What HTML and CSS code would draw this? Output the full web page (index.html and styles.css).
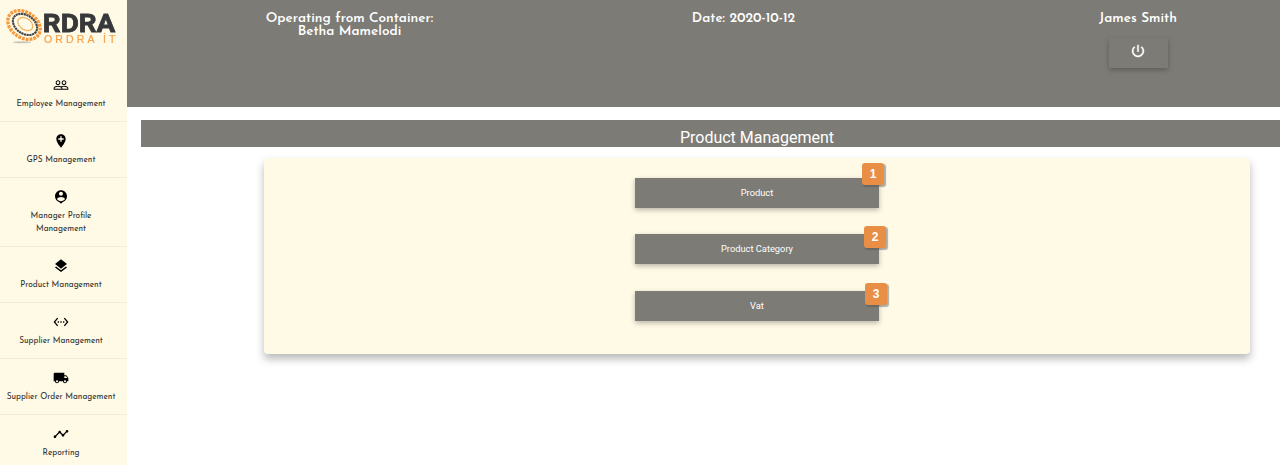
FILE: index.html
```html
<!DOCTYPE html>
<html lang="en">
<head>
<meta charset="utf-8">
<title>Product Management</title>
<link rel="stylesheet" href="styles.css">
</head>
<body>
<div class="app">
  <aside class="sidebar">
    <svg class="logo" width="127" height="66" viewBox="0 0 127 66">
      <defs><filter id="soft"><feGaussianBlur stdDeviation="0.45"/></filter></defs>
      <g filter="url(#soft)">
      <ellipse cx="22" cy="42.3" rx="9" ry="1" fill="#c9c5b8"/>
      <g fill="none" transform="rotate(34 24 25)">
        <ellipse cx="24" cy="25" rx="17.5" ry="12.7" stroke="#f5993a" stroke-width="3.4" stroke-dasharray="2.8 1"/>
        <ellipse cx="24.5" cy="24" rx="13.2" ry="9.2" stroke="#444" stroke-width="2.1" stroke-dasharray="2.2 .5"/>
        <ellipse cx="24.5" cy="23.5" rx="8.2" ry="5.6" stroke="#f5a54c" stroke-width="1.3" stroke-dasharray="1.5 .3"/>
      </g>
      <text class="logo-name" x="42.8" y="32" textLength="72.5" lengthAdjust="spacingAndGlyphs">RDRA</text>
      <text class="logo-sub" x="44" y="42.6" textLength="71.500">ORDRA İT</text>
      </g>
    </svg>
    <nav class="menu">
      <a class="item"><svg class="icon" viewBox="0 0 24 24"><path d="M16.5 13c-1.2 0-3.07.34-4.5 1-1.43-.67-3.3-1-4.5-1C5.33 13 1 14.08 1 16.25V19h22v-2.75c0-2.17-4.33-3.25-6.5-3.25zm-4 4.5h-10v-1.25c0-.54 2.56-1.75 5-1.75s5 1.21 5 1.75v1.25zm9 0H14v-1.25c0-.46-.2-.86-.52-1.22.88-.3 1.96-.53 3.02-.53 2.44 0 5 1.21 5 1.75v1.25zM7.5 12c1.93 0 3.5-1.57 3.5-3.5S9.430 5 7.500 5 4 6.570 4 8.500 5.570 12 7.500 12zm0-5.500c1.100 0 2 .9 2 2s-.9 2-2 2-2-.9-2-2 .9-2 2-2zm9 5.500c1.930 0 3.500-1.570 3.500-3.500S18.430 5 16.500 5 13 6.570 13 8.500s1.570 3.500 3.500 3.500zm0-5.500c1.100 0 2 .9 2 2s-.9 2-2 2-2-.9-2-2 .9-2 2-2z"/></svg><span class="label">Employee Management</span></a>
      <a class="item"><svg class="icon" viewBox="0 0 24 24"><path d="M12 2C8.140 2 5 5.140 5 9c0 5.250 7 13 7 13s7-7.750 7-13c0-3.860-3.140-7-7-7zm4 8h-3v3h-2v-3H8V8h3V5h2v3h3v2z"/></svg><span class="label">GPS Management</span></a>
      <a class="item"><svg class="icon" viewBox="0 0 24 24"><path d="M12 2c-4.970 0-9 4.030-9 9 0 4.170 2.840 7.670 6.690 8.690L12 22l2.310-2.310C18.160 18.670 21 15.170 21 11c0-4.970-4.030-9-9-9zm0 2c1.660 0 3 1.340 3 3s-1.340 3-3 3-3-1.340-3-3 1.340-3 3-3zm0 14.300c-2.500 0-4.710-1.280-6-3.220.03-1.990 4-3.080 6-3.080 1.990 0 5.970 1.090 6 3.080-1.290 1.940-3.500 3.220-6 3.220z"/></svg><span class="label">Manager Profile<br>Management</span></a>
      <a class="item"><svg class="icon" viewBox="0 0 24 24"><path d="M11.990 18.540l-7.370-5.730L3 14.070l9 7 9-7-1.630-1.270-7.380 5.740zM12 16l7.360-5.730L21 9l-9-7-9 7 1.630 1.270L12 16z"/></svg><span class="label">Product Management</span></a>
      <a class="item"><svg class="icon" viewBox="0 0 24 24"><path d="M7.770 6.760L6.230 5.480.82 12l5.410 6.520 1.540-1.280L3.420 12l4.350-5.240zM7 13h2v-2H7v2zm10-2h-2v2h2v-2zm-6 2h2v-2h-2v2zm6.770-7.520l-1.540 1.280L20.580 12l-4.350 5.240 1.540 1.280L23.180 12l-5.410-6.520z"/></svg><span class="label">Supplier Management</span></a>
      <a class="item"><svg class="icon" viewBox="0 0 24 24"><path d="M20 8h-3V4H3c-1.100 0-2 .9-2 2v11h2c0 1.660 1.340 3 3 3s3-1.340 3-3h6c0 1.660 1.340 3 3 3s3-1.340 3-3h2v-5l-3-4zM6 18.500c-.83 0-1.500-.67-1.500-1.500s.67-1.500 1.500-1.500 1.500.67 1.500 1.500-.67 1.500-1.500 1.500zm13.500-9l1.960 2.500H17V9.500h2.500zm-1.500 9c-.83 0-1.500-.67-1.500-1.500s.67-1.500 1.500-1.500 1.500.67 1.500 1.500-.67 1.500-1.500 1.500z"/></svg><span class="label">Supplier Order Management</span></a>
      <a class="item"><svg class="icon" viewBox="0 0 24 24"><path d="M23 8c0 1.100-.9 2-2 2-.18 0-.35-.02-.51-.07l-3.560 3.550c.05.16.07.34.07.52 0 1.100-.9 2-2 2s-2-.9-2-2c0-.18.02-.36.07-.52l-2.550-2.550c-.16.05-.34.07-.52.07s-.36-.02-.52-.07l-4.550 4.560c.05.16.07.33.07.51 0 1.100-.9 2-2 2s-2-.9-2-2 .9-2 2-2c.18 0 .35.02.51.07l4.560-4.550C8.020 9.360 8 9.180 8 9c0-1.100.9-2 2-2s2 .9 2 2c0 .18-.02.36-.07.52l2.550 2.550c.16-.05.34-.07.52-.07s.36.02.52.07l3.550-3.560C19.020 8.350 19 8.180 19 8c0-1.100.9-2 2-2s2 .9 2 2z"/></svg><span class="label">Reporting</span></a>
    </nav>
  </aside>
  <main class="main">
    <header class="header">
      <div class="cell">Operating from Container:<br>Betha Mamelodi</div>
      <div class="cell">Date: 2020-10-12</div>
      <div class="cell user"><span>James Smith</span>
        <button class="power" aria-label="Log out"><svg width="16" height="16" viewBox="0 0 24 24"><path d="M13 3h-2v10h2V3zm4.830 2.170l-1.420 1.420C17.990 7.860 19 9.810 19 12c0 3.870-3.130 7-7 7s-7-3.130-7-7c0-2.190 1.010-4.140 2.580-5.420L6.170 5.170C4.230 6.820 3 9.260 3 12c0 4.970 4.030 9 9 9s9-4.030 9-9c0-2.740-1.230-5.180-3.170-6.830z"/></svg></button>
      </div>
    </header>
    <h1 class="title">Product Management</h1>
    <section class="card">
      <button class="action">Product<span class="badge first">1</span></button>
      <button class="action">Product Category<span class="badge second">2</span></button>
      <button class="action last">Vat<span class="badge third">3</span></button>
    </section>
  </main>
</div>
</body>
</html>
```
FILE: styles.css
```css
* { box-sizing: border-box; }
body { margin: 0; background: #fff; overflow: hidden; }
.app { display: flex; height: 465px; overflow: hidden; }
.sidebar { flex: none; width: 127px; background: #fffae6; }
.logo { display: block; }
.logo-name { font: bold 26.5px Roboto, sans-serif; fill: #37383a; stroke: #37383a; stroke-width: .8; }
.logo-sub { font: 10.5px "Liberation Sans", sans-serif; fill: #f6a04b; stroke: #f6a04b; stroke-width: .2; }
.menu { display: flex; flex-direction: column; }
.item {
  display: flex; flex-direction: column; align-items: center;
  padding: 11px 5px 10px 0; border-bottom: 1px solid #f4ebd9;
}
.icon { width: 16px; height: 16px; margin-bottom: 5px; fill: #000; }
.label {
  font: 8.32px/13px "Josefin Sans", Lato, sans-serif;
  color: #333; text-align: center; white-space: nowrap;
}
.main { flex: 1; min-width: 0; }
.header {
  display: grid; grid-template-columns: 445px 343px 1fr;
  height: 107px; padding-top: 12px; background: #7d7b76;
  color: #fff; text-align: center;
  font: 600 13.6px/13px "Josefin Sans", Lato, sans-serif;
}
.user { display: flex; flex-direction: column; align-items: center; padding-left: 81px; }
.power {
  display: flex; align-items: center; justify-content: center;
  width: 59px; height: 30px; margin-top: 13px; padding: 0 0 4px;
  border: 0; background: #7d7b76; box-shadow: 0 2px 5px rgba(0,0,0,.26);
}
.power svg { fill: #fff; stroke: #fff; stroke-width: .6; }
.title {
  height: 27px; margin: 13px 0 0 14px; padding-left: 93px;
  background: #7d7b76; color: #fff; text-align: center;
  font: 400 16px/35px Roboto, sans-serif;
}
.card {
  display: flex; flex-direction: column; align-items: center; gap: 26px;
  width: 986px; height: 196px; margin: 11px 0 0 137px; padding-top: 20px;
  border-radius: 4px; background: #fffae6;
  box-shadow: 0 5px 8px rgba(0,0,0,.28);
}
.action {
  position: relative; flex: none; width: 244px; height: 30px; padding: 0;
  border: 0; background: #7d7b76; color: #fff;
  font: 9.3px/30px Roboto, sans-serif;
  box-shadow: 0 2px 5px rgba(0,0,0,.28);
}
.last { margin-top: 1px; }
.badge {
  position: absolute; width: 22px; height: 22px;
  border-radius: 3px; background: #e88e45; color: #fff;
  font: bold 12px/22px "Liberation Sans", Arial, sans-serif;
  box-shadow: 1.5px 1.5px 1px rgba(80,80,80,.45);
}
.first { left: 227px; top: -15px; }
.second { left: 229px; top: -8px; }
.third { left: 230px; top: -8px; }
```
